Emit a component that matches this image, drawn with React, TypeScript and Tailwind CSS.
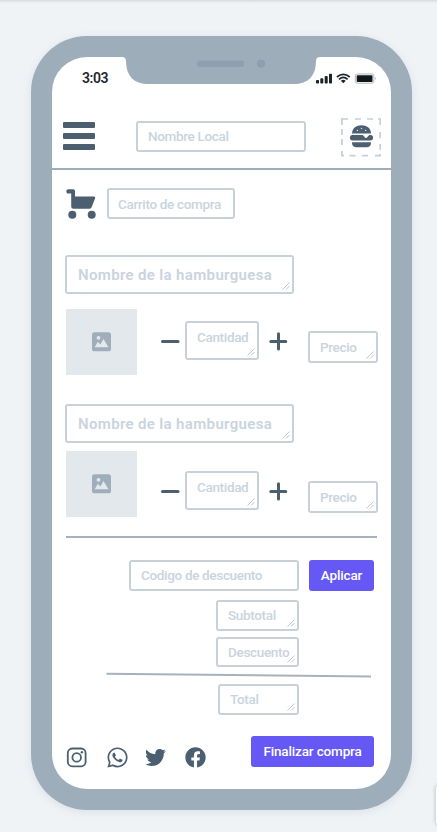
import type { ReactNode } from "react";
import { FaFacebook, FaTwitter, FaWhatsapp } from "react-icons/fa";

const LABEL = "text-[13.5px] leading-5 font-medium tracking-[-0.33px]";

function Grip() {
  return (
    <svg className="absolute right-[2px] bottom-[2px] h-2 w-2" viewBox="0 0 8 8" fill="none" stroke="#bcc7d0" strokeWidth="1">
      <path d="M0.5 7.5 7.5 0.5M4 7.5 7.5 4" />
    </svg>
  );
}

function Field({ className, text = LABEL, children, grip = false }: { className: string; text?: string; children: string; grip?: boolean }) {
  return (
    <div className={`relative shrink-0 rounded-[3px] border-2 border-[#c8d1d8] whitespace-nowrap text-[#c9d4de] ${className}`}>
      <span className={`block ${text}`}>{children}</span>
      {grip && <Grip />}
    </div>
  );
}

function ImageBox() {
  return (
    <div className="flex h-[66px] w-[71px] shrink-0 items-center justify-center bg-[#e2e8ec]">
      <svg className="h-5 w-5" viewBox="0.5 0 20 20">
        <rect x="0.5" y="0.3" width="19" height="19" rx="2.6" fill="#9eaebb" />
        <circle cx="7" cy="5.8" r="1.9" fill="#e2e8ec" />
        <path d="M3.2 15.2 6.3 9.8 8.8 12.6 12 7 17 15.2Z" fill="#e2e8ec" />
      </svg>
    </div>
  );
}

function Symbol({ plus = false }: { plus?: boolean }) {
  return (
    <svg className="h-5 w-5 shrink-0" viewBox="0 0 20 20" stroke="#4b5f70" strokeWidth="3" strokeLinecap="round">
      <path d={plus ? "M2.8 10.5H17.8M10.5 2.8V18" : "M2.5 10.5H18"} />
    </svg>
  );
}

function Item({ imageGap, controlGap }: { imageGap: string; controlGap: string }) {
  return (
    <div className="pl-[14px]">
      <Field className="-ml-px h-[39px] w-[229px] pt-[7px] pl-[11px]" text="text-[15px] leading-[22px] font-semibold tracking-[0.35px]" grip>
        Nombre de la hamburguesa
      </Field>
      <div className={`flex items-start ${imageGap}`}>
        <ImageBox />
        <div className={`flex items-start ${controlGap}`}>
          <div className="mt-[10px] ml-[23px]"><Symbol /></div>
          <Field className="ml-[5px] h-[39px] w-[74px] pt-[4px] pl-[10px]" grip>
            Cantidad
          </Field>
          <div className="mt-[10px] ml-[9px]"><Symbol plus /></div>
          <Field className="mt-[10px] ml-[20px] h-8 w-[70px] pt-[4px] pl-[10px]" grip>
            Precio
          </Field>
        </div>
      </div>
    </div>
  );
}

function PrimaryButton({ className, children }: { className: string; children: ReactNode }) {
  return (
    <button className={`h-[31px] shrink-0 rounded-[3px] bg-[#6558f5] text-center text-[13.5px] font-medium tracking-[-0.15px] whitespace-nowrap text-white ${className}`}>
      {children}
    </button>
  );
}

function StatusIcons() {
  return (
    <svg className="h-3 w-[62px]" viewBox="0 0 62 12">
      <g fill="#1d252c">
        <rect x="0" y="7" width="3" height="3.5" rx=".8" />
        <rect x="4.3" y="5.3" width="3" height="5.2" rx=".8" />
        <rect x="8.7" y="3" width="3" height="7.5" rx=".8" />
        <rect x="13" y="0.8" width="3" height="9.7" rx=".8" />
        <path d="M27.3 10.2 24.9 7.8Q27.3 5.8 29.7 7.8Z" />
      </g>
      <g fill="none" stroke="#1d252c" strokeWidth="1.7">
        <path d="M20.9 4Q27.3-1.3 33.7 4M23 6.3Q27.3 2.6 31.6 6.3" />
      </g>
      <rect x="39.3" y="1" width="18.6" height="9.2" rx="2" fill="#fff" stroke="#b5b5b8" />
      <rect x="40.7" y="2.2" width="15.8" height="6.8" rx=".8" fill="#10181e" />
      <path d="M59 3.8Q60.7 5.6 59 7.4Z" fill="#b5b5b8" />
    </svg>
  );
}

function Burger() {
  return (
    <svg className="h-10 w-10 shrink-0" viewBox="0 0 40 40">
      <path d="M.9 7V1H7M14 1H20M26 1H32M37 1H39.2V7M39.2 14V20M39.2 26V32M39.2 36V37.7H34M27 37.7H21M14.5 37.7H8.5M3 37.7H.9V33M.9 27V21M.9 17V11" fill="none" stroke="#c5cfd7" strokeWidth="1.7" />
      <g fill="#4b5f70">
        <path d="M11 15.6C11 10 15.5 7.2 20.5 7.2S30 10 30 15.6Z" />
        <path d="M11.5 17H29.5C33 17 33 22.6 29.5 22.6H11.5C8 22.6 8 17 11.5 17Z" />
        <path d="M11 24.2H30V25C30 28 28 29.3 25.5 29.3H15.5C13 29.3 11 28 11 25Z" />
      </g>
      <path d="M21.5 17.1H28.5C26.8 17.6 26.8 19.9 25 19.9S23.2 17.6 21.5 17.1Z" fill="#fff" />
      <g fill="#e2e8ec">
        <circle cx="16.4" cy="12.4" r=".7" />
        <circle cx="20.5" cy="10.4" r=".7" />
        <circle cx="24.6" cy="12.4" r=".7" />
      </g>
    </svg>
  );
}

export default function App() {
  return (
    <div className="relative h-[832px] w-[437px] overflow-hidden bg-[#eff3f6] pt-[36px] pl-[31px] font-['Roboto','Liberation_Sans',sans-serif]">
      <div className="absolute inset-x-0 top-0 h-[3px] bg-linear-to-b from-[#d6dadd] to-[#eff3f6]" />
      <div className="absolute top-[785px] -right-1 h-10 w-[5px] rounded-l bg-white shadow-[0_0_4px_rgba(0,0,0,0.25)]" />
      <div className="h-[774px] w-[381px] rounded-[56px] bg-[#9eadba] p-[21px] shadow-[0_2px_8px_rgba(90,110,130,0.13)]">
        <div className="relative flex h-[732px] w-[339px] flex-col overflow-hidden rounded-[35px] bg-white">
          <svg className="absolute top-0 left-[70px] h-[28px] w-[199px]" viewBox="0 0 199 28">
            <path d="M0 0Q4 0 4 4C4 19 12 27 26 27H172C186 27 194 19 194 4Q194 0 198 0Z" fill="#9eadba" />
            <rect x="75" y="3.5" width="47" height="6.5" rx="3.2" fill="#8f9fad" />
            <circle cx="139" cy="6.7" r="4.1" fill="#8f9fad" />
          </svg>
          <div className="flex h-[61px] items-start justify-between pt-[12px] pr-[13px] pl-[30px]">
            <span className="text-[14px] leading-[19px] font-semibold tracking-[-0.4px] text-[#23282e]">3:03</span>
            <div className="mt-[4px]"><StatusIcons /></div>
          </div>
          <header className="flex h-[52px] shrink-0 items-start border-b-2 border-[#9eadba] pl-[11px]">
            <div className="mt-[4px] flex flex-col gap-[5px]">
              <i className="h-[6px] w-[32px] rounded-[1px] bg-[#4b5f70]" />
              <i className="h-[6px] w-[32px] rounded-[1px] bg-[#4b5f70]" />
              <i className="h-[6px] w-[32px] rounded-[1px] bg-[#4b5f70]" />
            </div>
            <Field className="mt-[3px] ml-[41px] h-[31px] w-[170px] pt-[3px] pl-[10px]">
              Nombre Local
            </Field>
            <div className="ml-[35px]"><Burger /></div>
          </header>
          <div className="mt-[18px] flex shrink-0 items-start pl-[14px]">
            <svg className="mt-px h-[30px] w-[30px]" viewBox="0 0.5 30 30" fill="#4b5f70">
              <path d="M2.3.8H7.2Q9 .8 9 2.6V7.9H27.5Q29.8 8 29 10L25.6 18.7Q24.8 20.3 23 20.3H7.3Q5.2 20.3 5.2 18.2V5H2.3C-.3 5-.3.8 2.3.8Z" />
              <circle cx="6.3" cy="26.2" r="4" />
              <circle cx="25.7" cy="26.2" r="4" />
            </svg>
            <Field className="ml-[11px] h-[31px] w-[128px] pt-[4px] pl-[9px]">
              Carrito de compra
            </Field>
          </div>
          <div className="mt-[36px]"><Item imageGap="mt-[15px]" controlGap="mt-[12px]" /></div>
          <div className="mt-[29px]"><Item imageGap="mt-[8px]" controlGap="mt-[20px]" /></div>
          <div className="mt-[19px] ml-[14px] h-[2px] w-[311px] shrink-0 bg-[#a5b2be]" />
          <div className="mt-[22px] ml-[77px] flex shrink-0 gap-[10px]">
            <Field className="h-[31px] w-[170px] pt-[3px] pl-[10px]">
              Codigo de descuento
            </Field>
            <PrimaryButton className="w-[65px]">Aplicar</PrimaryButton>
          </div>
          <div className="mr-[92px] flex shrink-0 flex-col items-end pt-[9px]">
            <Field className="h-[31px] w-[83px] pt-[3px] pl-[10px]" grip>Subtotal</Field>
            <Field className="mt-[6px] h-[30px] w-[83px] pt-[3px] pl-[10px]" grip>Descuento</Field>
          </div>
          <svg className="mt-[5px] ml-[54px] h-[7px] w-[266px] shrink-0" viewBox="0 0 266 7">
            <path d="M.5 1.7 265 4.6" stroke="#a5b2be" strokeWidth="2" />
          </svg>
          <Field className="mt-[5px] ml-[166px] h-[31px] w-[81px] pt-[3px] pl-[10px]" grip>Total</Field>
          <footer className="mt-[21px] flex shrink-0 items-start text-[#4b5f70]">
            <div className="mt-[10px] ml-[14px] flex items-center">
              <svg className="h-[21px] w-[21px]" viewBox="0 0 21 21" fill="none" stroke="currentColor" strokeWidth="1.8">
                <rect x="1.8" y="1.5" width="17.8" height="17.8" rx="4.5" />
                <circle cx="10.7" cy="10.4" r="4.3" />
                <circle cx="15.9" cy="5.3" r="1.2" fill="currentColor" stroke="none" />
              </svg>
              <FaWhatsapp className="ml-[19px] h-[23px] w-[23px]" />
              <FaTwitter className="ml-[16px] h-[21px] w-[21px]" />
              <FaFacebook className="ml-[19px] h-[21px] w-[21px]" />
            </div>
            <PrimaryButton className="ml-[45px] w-[123px]">Finalizar compra</PrimaryButton>
          </footer>
        </div>
      </div>
    </div>
  );
}
